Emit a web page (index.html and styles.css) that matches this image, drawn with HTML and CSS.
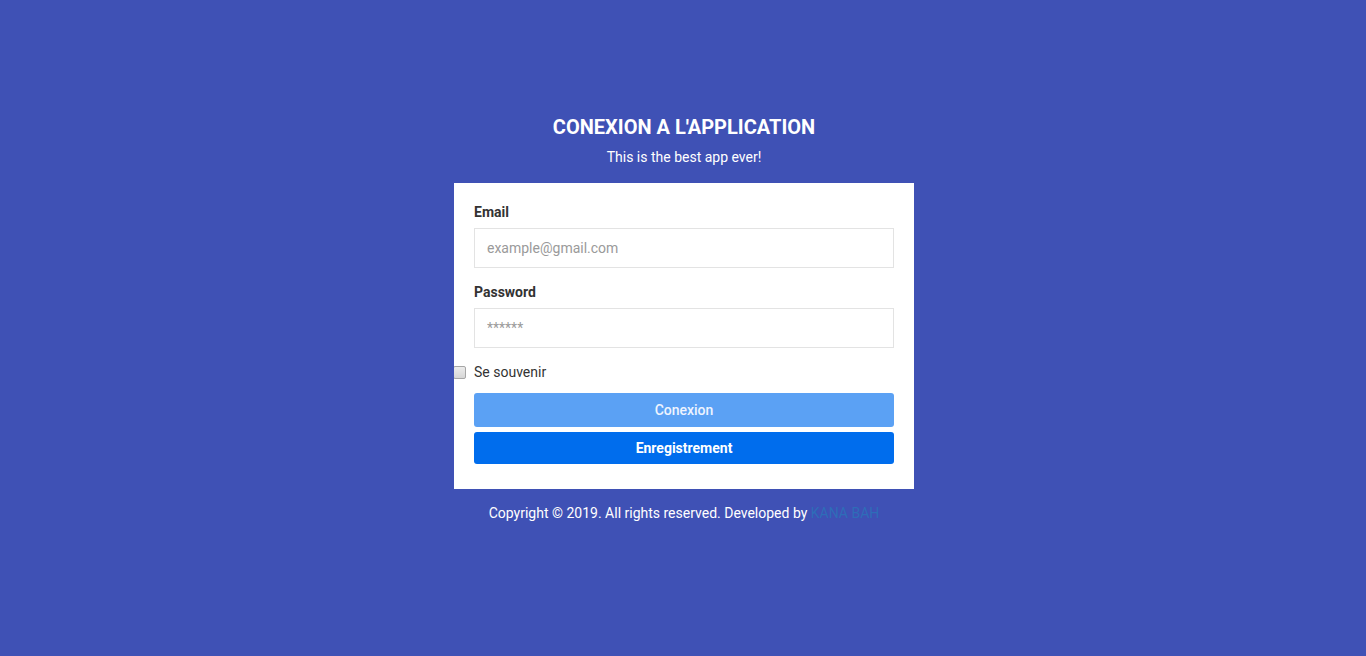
FILE: index.html
```html
<!DOCTYPE html>
<html lang="fr">
<head>
<meta charset="utf-8">
<title>Conexion</title>
<link rel="stylesheet" href="styles.css">
</head>
<body>
<main class="wrap">
  <h1 class="title">CONEXION A L'APPLICATION</h1>
  <p class="subtitle">This is the best app ever!</p>
  <form class="card">
    <label class="label" for="email">Email</label>
    <input class="input" id="email" type="text" placeholder="example@gmail.com">
    <label class="label label-gap" for="pwd">Password</label>
    <input class="input" id="pwd" type="password" placeholder="******">
    <div class="remember">
      <input class="check" id="rem" type="checkbox">
      <label class="check-label" for="rem">Se souvenir</label>
    </div>
    <button class="btn btn-light" type="button">Conexion</button>
    <button class="btn btn-dark" type="button">Enregistrement</button>
  </form>
  <p class="footer">Copyright © 2019. All rights reserved. Developed by <a class="footer-link" href="#">KANA BAH</a></p>
</main>
</body>
</html>
```
FILE: styles.css
```css
* { box-sizing: border-box; }
html, body { height: 100%; }
body {
  margin: 0;
  background: #3f51b5;
  font-family: Roboto, "Liberation Sans", sans-serif;
  color: #333;
}
.wrap {
  width: 462px;
  margin: 0 auto;
  padding: 115px 0 0 2px;
  display: flex;
  flex-direction: column;
}
.title {
  margin: 0;
  font-size: 20px;
  line-height: 24px;
  font-weight: 700;
  color: #fff;
  text-align: center;
}
.subtitle {
  margin: 9px 0 0;
  font-size: 14px;
  line-height: 18px;
  color: #fff;
  text-align: center;
}
.card {
  margin-top: 17px;
  background: #fff;
  padding: 19px 20px 25px;
  display: flex;
  flex-direction: column;
  overflow: hidden;
}
.label {
  font-size: 14px;
  line-height: 20px;
  font-weight: 700;
  color: #333;
  margin-bottom: 6px;
}
.label-gap { margin-top: 14px; }
.input {
  height: 40px;
  width: 100%;
  border: 1px solid #e3e3e3;
  padding: 0 12px;
  font-family: inherit;
  font-size: 14px;
  color: #333;
  outline: none;
}
.input::placeholder { color: #9a9a9a; }
.remember {
  margin: 14px 0 0 -21px;
  height: 20px;
  display: flex;
  align-items: center;
}
.check {
  appearance: none;
  -webkit-appearance: none;
  margin: 1px 8px 0 0;
  width: 13px;
  height: 13px;
  border: 1px solid #a6a6a6;
  border-radius: 2px;
  background: linear-gradient(#ececec, #d6d6d6);
}
.check-label {
  font-size: 14px;
  color: #333;
}
.btn {
  width: 100%;
  border: 0;
  border-radius: 3px;
  color: #fff;
  font-family: inherit;
  font-size: 14px;
  cursor: pointer;
}
.btn-light {
  margin-top: 11px;
  height: 34px;
  background: #5ba1f4;
  font-weight: 500;
  color: #eef4ff;
}
.btn-dark {
  margin-top: 5px;
  height: 32px;
  background: #006ded;
  font-weight: 700;
}
.footer {
  margin: 15px 0 0;
  font-size: 14px;
  line-height: 18px;
  color: #fff;
  text-align: center;
}
.footer-link {
  color: #2e6db8;
  text-decoration: none;
}
```
